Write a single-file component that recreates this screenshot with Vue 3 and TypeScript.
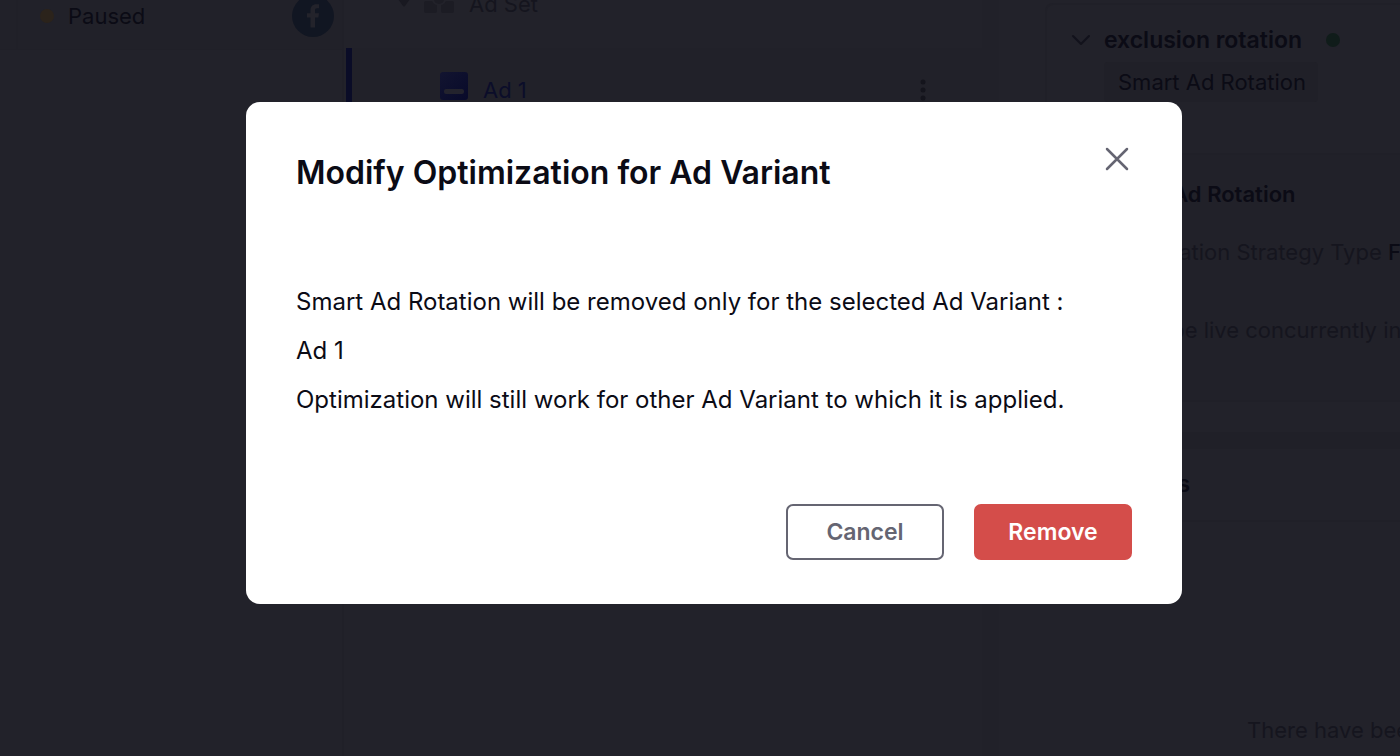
<script setup lang="ts">
import { ref } from 'vue'

interface Optimization {
  name: string
  kind: string
  label: string
  type: string
}

const adName = ref('Ad 1')
const open = ref(true)
const optimization: Optimization = {
  name: 'exclusion rotation',
  kind: 'Smart Ad Rotation',
  label: 'Ad Rotation Strategy Type',
  type: 'Fixed',
}

function close(): void {
  open.value = false
}
</script>

<template>
  <div class="page">
    <main class="workspace" :inert="open">
      <section class="status">
        <div class="status-row">
          <span class="status-cell"><i class="dot paused"></i>Paused</span>
          <span class="network">
            <svg viewBox="0 0 42 42" width="42" height="42" aria-hidden="true">
              <circle cx="21" cy="21" r="21" fill="#111622" />
              <path d="M18.500 27.500V17.500H15V13.300H18.500V10.500C18.500 6.500 20.600 4.300 24.300 4.300H27V8.300H25C23.500 8.300 23 9 23 10.500V13.300H27L26.400 17.500H23V27.500Z" transform="translate(0 5)" fill="#23232b" />
            </svg>
          </span>
        </div>
      </section>

      <section class="tree">
        <div class="tree-row set">
          <svg class="caret" viewBox="0 0 14 10" width="14" height="10" aria-hidden="true"><path d="M1 0H13L8 7Q7 8 6 7Z" fill="#191921" /></svg>
          <svg class="set-icon" viewBox="0 0 30 20" width="30" height="20" aria-hidden="true">
            <g fill="#1c1c24">
              <path d="M2 7H8Q10 11 13 11V17Q13 19 11 19H2Q0 19 0 17V9Q0 7 2 7Z" />
              <path d="M28 7H22Q20 11 17 11V17Q17 19 19 19H28Q30 19 30 17V9Q30 7 28 7Z" />
              <circle cx="15" cy="5" r="5" />
            </g>
          </svg>
          <span>Ad Set</span>
        </div>
        <div class="tree-row ad">
          <svg viewBox="0 0 28 28" width="28" height="28" aria-hidden="true">
            <defs><linearGradient id="tile" x1="0" y1="0" x2="1" y2="1"><stop offset="0" stop-color="#121430" /><stop offset="1" stop-color="#080a2a" /></linearGradient></defs>
            <rect width="28" height="28" rx="3" fill="url(#tile)" />
            <rect x="4" y="17" width="20" height="5" rx="2" fill="#23232d" />
          </svg>
          <a href="#" class="ad-link">{{ adName }}</a>
          <button type="button" class="more" aria-label="More actions">
            <svg viewBox="0 0 6 22" width="6" height="22" aria-hidden="true"><g fill="#14141c"><circle cx="3" cy="3" r="2.500" /><circle cx="3" cy="11" r="2.500" /><circle cx="3" cy="19" r="2.500" /></g></svg>
          </button>
        </div>
      </section>

      <aside class="details">
        <section class="panel">
          <article class="card">
            <header class="card-head">
              <div class="card-title">
                <svg viewBox="0 0 20 12" width="20" height="12" aria-hidden="true"><path d="M2 2L10 10L18 2" fill="none" stroke="#12121b" stroke-width="2" stroke-linecap="round" stroke-linejoin="round" /></svg>
                <h2>{{ optimization.name }}</h2>
                <i class="dot active"></i>
              </div>
              <span class="chip">{{ optimization.kind }}</span>
            </header>
            <div class="card-body">
              <h3>{{ optimization.kind }}</h3>
              <p>{{ optimization.label }} <b>{{ optimization.type }}</b></p>
              <p>Ad to be live concurrently in</p>
            </div>
          </article>
        </section>
        <section class="panel activity">
          <h2 class="activity-title">Recent Activities</h2>
          <p class="empty">There have been no activities</p>
        </section>
      </aside>
    </main>

    <div v-if="open" class="overlay">
      <div class="modal" role="dialog" aria-modal="true" aria-labelledby="modal-title">
        <header class="modal-head">
          <h1 id="modal-title">Modify Optimization for Ad Variant</h1>
          <button type="button" class="close" aria-label="Close" @click="close">
            <svg viewBox="0 0 24 24" width="24" height="24" aria-hidden="true"><path d="M2 2L22 22M22 2L2 22" fill="none" stroke="#656572" stroke-width="2.500" stroke-linecap="round" /></svg>
          </button>
        </header>
        <div class="modal-body">
          <p>Smart Ad Rotation will be removed only for the selected Ad Variant :</p>
          <p>{{ adName }}</p>
          <p>Optimization will still work for other Ad Variant to which it is applied.</p>
        </div>
        <footer class="modal-foot">
          <button type="button" class="btn cancel" @click="close">Cancel</button>
          <button type="button" class="btn remove" @click="close">Remove</button>
        </footer>
      </div>
    </div>
  </div>
</template>

<style>
body {
  margin: 0;
  background: #22222a;
}
</style>

<style scoped>
* {
  box-sizing: border-box;
}
h1, h2, h3, p {
  margin: 0;
}
.page {
  position: relative;
  height: 100vh;
  overflow: hidden;
  background: #22222a;
  color: #0b0b15;
  font-family: Inter, "Liberation Sans", sans-serif;
  font-size: 22px;
  line-height: 28px;
}
.workspace {
  display: grid;
  grid-template-columns: 344px minmax(0, 1fr) 418px;
  height: 100%;
}
.status {
  border-right: 2px solid #202028;
}
.status-row {
  display: flex;
  height: 68px;
  margin-top: -18px;
  padding-left: 16px;
  border-bottom: 1px solid #202028;
  background: #212129;
}
.status-cell {
  display: flex;
  flex: 1;
  align-items: center;
  gap: 14px;
  padding-left: 22px;
  border-left: 2px solid #202028;
}
.network {
  display: flex;
  align-items: center;
  padding: 0 8px 0 24px;
}
.dot {
  flex: none;
  width: 14px;
  height: 14px;
  border-radius: 7px;
}
.paused {
  background: #2b231b;
}
.active {
  margin-left: 11px;
  background: #101c1a;
}
.tree {
  overflow: hidden;
}
.tree-row {
  display: flex;
  align-items: center;
  height: 88px;
}
.set {
  margin-top: -40px;
  padding-left: 53px;
  color: #15151e;
}
.caret {
  margin-right: 13px;
}
.set-icon {
  margin-right: 15px;
}
.ad {
  gap: 15px;
  height: 84px;
  margin-left: 2px;
  padding: 0 56px 0 88px;
  border-left: 6px solid #0a0c27;
  background: #212129;
}
.ad > svg {
  margin-bottom: 8px;
}
.ad-link {
  color: #0b0d29;
  text-decoration: none;
}
.more {
  display: flex;
  margin-left: auto;
  padding: 0;
  border: 0;
  background: none;
}
.details {
  overflow: hidden;
  border-left: 17px solid #212129;
  white-space: nowrap;
}
.panel {
  padding: 3px 0 30px 46px;
  border-bottom: 17px solid #202028;
}
.card {
  border: 2px solid #202028;
  border-right: 0;
  border-radius: 8px 0 0 8px;
}
.card-head {
  height: 150px;
  padding: 21px 0 0 24px;
  border-bottom: 2px solid #202028;
}
.card-title {
  display: flex;
  align-items: center;
  gap: 13px;
}
.card-title h2,
.activity-title {
  font-size: 23px;
  font-weight: 600;
}
.chip {
  display: inline-block;
  margin: 8px 0 0 33px;
  padding: 6px 12px 6px 14px;
  border-radius: 4px;
  background: #202028;
}
.card-body {
  padding: 25px 0 56px 56px;
  background: #212129;
}
.card-body h3 {
  margin-bottom: 30px;
  font-size: 22px;
  font-weight: 600;
}
.card-body p {
  margin-bottom: 50px;
  padding-left: 7px;
  color: #15151e;
}
.card-body p:last-child {
  margin-bottom: 0;
}
.card-body b {
  color: #0b0b15;
  font-weight: 500;
}
.activity {
  padding: 0;
  border: 0;
}
.activity-title {
  padding: 21px 0 22px 4px;
  border-bottom: 2px solid #202028;
}
.empty {
  padding: 194px 0 0 248px;
  color: #15151e;
}
.overlay {
  position: absolute;
  inset: 0;
  display: flex;
  align-items: flex-start;
  justify-content: center;
  padding: 102px 0 0 28px;
}
.modal {
  width: 936px;
  max-width: 90%;
  padding: 44px 50px;
  border-radius: 14px;
  background: #fff;
}
.modal-head {
  display: flex;
  align-items: flex-start;
  justify-content: space-between;
}
.modal-head h1 {
  padding-top: 8px;
  font-size: 32px;
  font-weight: 600;
  line-height: 38px;
}
.close {
  display: flex;
  margin-right: 3px;
  padding: 1px 0;
  border: 0;
  background: none;
  cursor: pointer;
}
.modal-body {
  padding: 85px 0 80px;
  font-size: 24px;
  line-height: 49px;
}
.modal-foot {
  display: flex;
  justify-content: flex-end;
  gap: 30px;
}
.btn {
  width: 158px;
  height: 56px;
  padding: 0;
  border: 2px solid #656572;
  border-radius: 7px;
  background: #fff;
  color: #656572;
  font-family: inherit;
  font-size: 23px;
  font-weight: 600;
  cursor: pointer;
}
.remove {
  border-color: #d44d4a;
  background: #d44d4a;
  color: #fff;
}
</style>
